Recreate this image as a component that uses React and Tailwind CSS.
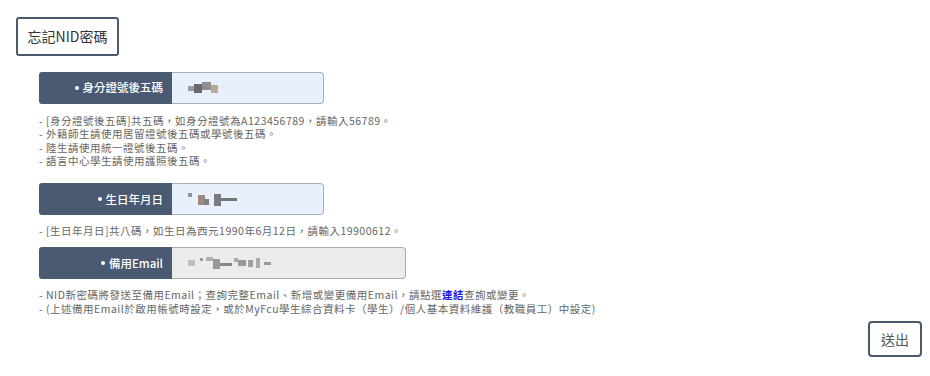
const font = { fontFamily: '"Noto Sans CJK TC", "Noto Sans", sans-serif' };

function Blur({ blocks }) {
    return (
        <div className="relative h-[14px] w-[160px] blur-[0.6px]">
            {blocks.map((b, i) => (
                <span
                    key={i}
                    className="absolute"
                    style={{ left: b[0], top: b[1], width: b[2], height: b[3], background: b[4] }}
                />
            ))}
        </div>
    );
}

function Field({ label, inputClass, blocks }) {
    return (
        <div className="flex h-[32px]">
            <div className="flex w-[133px] items-center justify-end rounded-l-[3px] bg-[#4a5a72] pr-[9px] text-[11.5px] font-medium text-white">
                <span className="mr-[4px] inline-block h-[4px] w-[4px] rounded-full bg-white" />
                {label}
            </div>
            <div className={`flex items-center rounded-r-[4px] border border-l-0 px-[16px] ${inputClass}`}>
                <Blur blocks={blocks} />
            </div>
        </div>
    );
}

function Notes({ children, className }) {
    return (
        <div className={`text-[10.5px] leading-[13.3px] tracking-[0.5px] text-[#666] ${className}`}>
            {children}
        </div>
    );
}

export default function App() {
    return (
        <div className="relative h-[376px] w-[930px] bg-white pl-[16px] pt-[17px]" style={font}>
            <div className="inline-flex h-[39px] w-[103px] items-center justify-center rounded-[3px] border-2 border-[#4b5a6e] text-[14px] text-[#333]">
                忘記NID密碼
            </div>

            <div className="ml-[23px] mt-[16px]">
                <Field
                    label="身分證號後五碼"
                    inputClass="w-[152px] bg-[#e8f0fe] border-[#a8b0bc]"
                    blocks={[
                        [0, 5, 6, 5, '#9a9a9a'],
                        [6, 3, 8, 9, '#6a6a6a'],
                        [14, 1, 9, 8, '#909090'],
                        [23, 4, 7, 8, '#b8a890'],
                    ]}
                />
                <Notes className="mt-[10px]">
                    <div>- [身分證號後五碼]共五碼，如身分證號為A123456789，請輸入56789。</div>
                    <div>- 外籍師生請使用居留證號後五碼或學號後五碼。</div>
                    <div>- 陸生請使用統一證號後五碼。</div>
                    <div>- 語言中心學生請使用護照後五碼。</div>
                </Notes>

                <div className="mt-[16px]">
                    <Field
                        label="生日年月日"
                        inputClass="w-[152px] bg-[#e8f0fe] border-[#a8b0bc]"
                        blocks={[
                            [0, 1, 4, 4, '#8894b0'],
                            [10, 3, 7, 10, '#a08a80'],
                            [16, 7, 5, 6, '#808080'],
                            [26, 2, 7, 12, '#7a7a80'],
                            [33, 6, 16, 3, '#777'],
                        ]}
                    />
                </div>
                <Notes className="mt-[9px]">
                    <div>- [生日年月日]共八碼，如生日為西元1990年6月12日，請輸入19900612。</div>
                </Notes>

                <div className="mt-[10px]">
                    <Field
                        label="備用Email"
                        inputClass="w-[234px] bg-[#ececec] border-[#aaaaaa]"
                        blocks={[
                            [0, 4, 7, 6, '#c0c0c0'],
                            [12, 2, 3, 3, '#999'],
                            [18, 1, 7, 4, '#b0b0b0'],
                            [25, 3, 7, 10, '#999'],
                            [32, 7, 12, 3, '#888'],
                            [46, 2, 4, 4, '#aaa'],
                            [50, 4, 8, 6, '#999'],
                            [60, 4, 5, 7, '#a0a0a0'],
                            [68, 2, 4, 10, '#aaa'],
                            [76, 6, 7, 3, '#999'],
                        ]}
                    />
                </div>
                <Notes className="mt-[9px] leading-[14px]">
                    <div>
                        - NID新密碼將發送至備用Email；查詢完整Email、新增或變更備用Email，請點選
                        <a className="font-bold text-[#1a1aee]">連結</a>
                        查詢或變更。
                    </div>
                    <div>- (上述備用Email於啟用帳號時設定，或於MyFcu學生綜合資料卡（學生）/個人基本資料維護（教職員工）中設定)</div>
                </Notes>
            </div>

            <div className="absolute bottom-[19px] right-[8px] flex h-[36px] w-[54px] items-center justify-center rounded-[4px] border-2 border-[#4b5a6e] text-[14px] text-[#555]">
                送出
            </div>
        </div>
    );
}
